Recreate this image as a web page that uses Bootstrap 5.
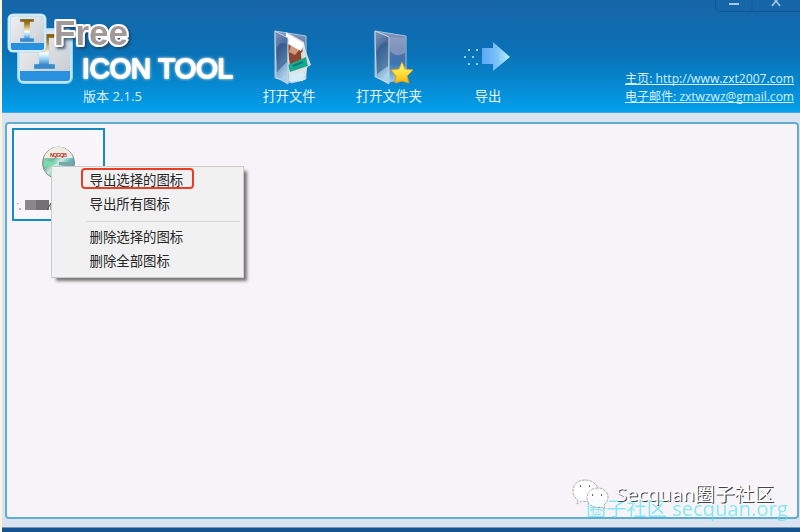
<!DOCTYPE html>
<html lang="zh-CN">
<head>
<meta charset="utf-8">
<meta name="viewport" content="width=device-width, initial-scale=1">
<title>Free Icon Tool</title>
<link rel="stylesheet" href="https://cdn.jsdelivr.net/npm/bootstrap@5.3.0/dist/css/bootstrap.min.css">
<style>
body{height:532px;overflow:hidden;background:#dae4f0;font:13.4px/18px "Open Sans","Noto Sans CJK SC",sans-serif}
.window-frame{height:532px;border-left:2px solid #fdf5e0}
.top-bar{height:113px;background:linear-gradient(#1766a8,#0b70b5 45%,#0684ca 70%,#039ae6 94%,#04a0ee);border-bottom:1px solid #4ba8d8;color:#e4f5ff}
.logo{width:245px;height:112px}
.tool{color:#e9f7ff;font-size:13.2px;line-height:18px;padding-top:24px}
.tool svg{width:60px;height:64px;margin-bottom:-1px}
.tool-a{width:84px}.tool-b{width:116px}.tool-c{width:82px}
.links{padding:70px 6px 0 0;width:178px;font-size:12.3px;line-height:18px}
.links a{color:#d6f0ff;white-space:nowrap}
.links svg{display:block;width:172px;height:18px;overflow:visible}
.window-buttons{top:-4px;right:-4px;width:89px;height:16px;border:1px solid #0c5792;border-radius:0 0 5px 5px;background:#1767a8}
.work-area{height:397px;margin:9px 1px 0 3px;padding:4px 5px;background:#f6f4f8;border:2px solid #62accf;border-radius:4px}
.thumb{width:93px;height:93px;border:2px solid #168bc4;background:#f8f6fa}
.thumb svg{width:89px;height:89px}
.popup{left:51px;top:166px;width:193px;height:112px;background:#f1f1f1;border:1px solid #cbcbcb;box-shadow:4px 4px 3px -1px #777;color:#252525}
.choice{height:24.5px;padding-left:37.5px;line-height:24px;white-space:nowrap}
.choice.selected{margin:1px 0 3px 29px;padding-left:6.5px;width:113px;height:21px;line-height:20px;border:2px solid #e93d25;border-radius:4px}
.divider{height:1px;margin:4px 3px 3px 34px;background:#d8d8d8}
.bottom-bar{height:5px;margin-top:8px;background:#145491;border-top:1px solid #7895b5}
.watermark{left:570px;top:474px;width:230px;height:54px}
.signature{text-shadow:1px 1px 0 #444}
</style>
<script src="https://cdn.jsdelivr.net/npm/bootstrap@5.3.0/dist/js/bootstrap.bundle.min.js"></script>
</head>
<body>
<div class="window-frame">
<header class="top-bar d-flex position-relative">
<svg class="logo flex-shrink-0" viewBox="2 0 245 112">
<defs>
<linearGradient id="tile" x2="1" y2="1"><stop stop-color="#f2f2f2"/><stop offset="1" stop-color="#c4c9cf"/></linearGradient>
<linearGradient id="ink" x2="0" y2="1"><stop stop-color="#805806"/><stop offset=".2" stop-color="#a87818"/><stop offset=".42" stop-color="#e2c98c"/><stop offset=".55" stop-color="#fff"/><stop offset=".72" stop-color="#8fcdf5"/><stop offset=".88" stop-color="#3a87ca"/></linearGradient>
<filter id="shade" x="-20%" y="-30%" width="150%" height="170%"><feDropShadow dx="2" dy="2" stdDeviation="1.5" flood-color="#173c60" flood-opacity=".8"/></filter>
<filter id="glow" x="-10%" y="-40%" width="120%" height="180%"><feDropShadow dx="0" dy="0" stdDeviation="1.5" flood-color="#f1e6df"/></filter>
</defs>
<rect x="18.5" y="29.500" width="53" height="53" rx="5" fill="url(#tile)" stroke="#8fd2f8" stroke-width="3"/>
<rect x="19" y="30" width="52" height="52" rx="5" fill="none" stroke="#f6fbff"/>
<path d="M20 71h50v7q0 3-3 3H23q-3 0-3-3z" fill="#2790df"/>
<path d="M34 34h21v4h-6v26h6v5H34v-5h5V38h-5z" fill="url(#ink)" stroke="#a9dcf8" stroke-width=".4"/>
<rect x="9" y="15" width="36" height="36" rx="4" fill="url(#tile)" stroke="#a8dbfb" stroke-width="3"/>
<rect x="9" y="15" width="36" height="36" rx="4" fill="none" stroke="#f6fbff"/>
<path d="M11 43h33v5q0 2-2 2H13q-2 0-2-2z" fill="#2790df"/>
<path d="M20 19h14v3h-4v16h4v4H20v-4h4V22h-4z" fill="url(#ink)" stroke="#a9dcf8" stroke-width=".4"/>
<text x="54" y="45" textLength="74" lengthAdjust="spacingAndGlyphs" font-family="Liberation Sans" font-size="35" font-weight="700" fill="#a39999" stroke="#fff" stroke-width="4" paint-order="stroke" stroke-linejoin="round" filter="url(#shade)">Free</text>
<text x="82" y="78" textLength="151" lengthAdjust="spacingAndGlyphs" font-family="Liberation Sans" font-size="27.500" fill="#fff" stroke="#fff" stroke-width="1.800" stroke-linejoin="round" filter="url(#glow)">ICON TOOL</text>
<text x="83" y="101" textLength="59" font-family="Open Sans,Noto Sans CJK SC" font-size="13" fill="#dcf2ff">版本 2.1.5</text>
</svg>
<nav class="d-flex">
<div class="tool tool-a d-flex flex-column align-items-center">
<svg viewBox="259 24 60 64">
<defs><linearGradient id="glass" x2="0" y2="1"><stop stop-color="#8d9bc2"/><stop offset=".35" stop-color="#586d9e"/><stop offset=".65" stop-color="#3878b4"/><stop offset="1" stop-color="#9bcce9"/></linearGradient><linearGradient id="front" x2=".3" y2="1"><stop stop-color="#8896bd"/><stop offset=".4" stop-color="#4d6e9d"/><stop offset="1" stop-color="#a9d1e9"/></linearGradient></defs>
<path d="M275 31l31 5v43l-14 4-17-5z" fill="url(#glass)" stroke="#a8c7df"/>
<path d="M286 32l18 10 4 21-3 17-16 1z" fill="#dfe2e5"/><path d="M287 43l15 4 2 11-14 8z" fill="#8c4734"/><path d="M291 45l9 4-5 6-6-3z" fill="#d29a79"/><path d="M286 33l18 11-3 7-15-8z" fill="#fff"/><path d="M301 53l4-4 6 16-9 5z" fill="#d8dedb"/>
<path d="M288 65l18-8 2 9-18 6z" fill="#19a993"/><path d="M293 66l10-4" stroke="#087d73" stroke-width="2"/>
<path d="M290 74l14-2-1 9-13 1z" fill="#d4ecf7"/>
<path d="M275 31l13 7v46l-12-7z" fill="url(#front)" stroke="#c1d6e7"/><path d="M277 48q2-7 10-4v18l-10 10z" fill="#234c84" opacity=".5"/>
</svg><span>打开文件</span></div>
<div class="tool tool-b d-flex flex-column align-items-center">
<svg viewBox="359 24 60 64"><path d="M375 31l31 5v43l-17 3-14-5z" fill="url(#glass)" stroke="#9dc3de"/><path d="M390 37l15 1v15q-9 5-15-2z" fill="#96a7ca" opacity=".65"/><path d="M375 31l14 6v47l-13-7z" fill="url(#front)" stroke="#bed5e5"/><path d="M377 53q2-11 11-11v24l-11 8z" fill="#285786" opacity=".55"/>
<defs><linearGradient id="gold" x2="0" y2="1"><stop stop-color="#fff7a4"/><stop offset=".5" stop-color="#ffe23d"/><stop offset="1" stop-color="#f4b70f"/></linearGradient></defs><path d="M402 62l3 7 8 1-6 6 2 7-7-2-7 2 1-7-5-6 8-1z" fill="url(#gold)" stroke="#e0a024" stroke-linejoin="round"/></svg><span>打开文件夹</span></div>
<div class="tool tool-c d-flex flex-column align-items-center">
<svg viewBox="458 24 60 64"><defs><linearGradient id="arrow"><stop stop-color="#5ca9f2"/><stop offset=".5" stop-color="#79bef9"/><stop offset="1" stop-color="#b6f6ff"/></linearGradient></defs><path d="M482 48h11v-6l17 15-17 14v-7h-11z" fill="url(#arrow)"/><path d="M468 49h2v2h-2zm8 0h2v2h-2zm-4 7h2v2h-2zm-8 0h2v2h-2zm4 7h2v2h-2zm8 0h2v2h-2z" fill="#84d4f8"/></svg><span>导出</span></div>
</nav>
<div class="links ms-auto">
<a href="#"><svg viewBox="0 0 172 18"><text x="3" y="13" textLength="169" lengthAdjust="spacingAndGlyphs" fill="currentColor">主页: http://www.zxt2007.com</text><path d="M3 14.500h169" stroke="currentColor"/></svg></a>
<a href="#"><svg viewBox="0 0 172 18"><text x="3" y="13" textLength="169" lengthAdjust="spacingAndGlyphs" fill="currentColor">电子邮件: zxtwzwz@gmail.com</text><path d="M3 14.500h169" stroke="currentColor"/></svg></a>
</div>
<div class="window-buttons position-absolute"><svg class="d-block" width="87" height="15" viewBox="0 0 87 15"><path d="M13 7h10" stroke="#a5c8e2" stroke-width="2"/><path d="M36 0v15" stroke="#145c98"/><path d="M56 9l4-5 4 5M57 0l3 4 3-4" fill="none" stroke="#9dc3df" stroke-width="1.800"/></svg></div>
</header>
<main class="work-area">
<div class="thumb"><svg class="d-block" viewBox="14 130 89 89"><defs><linearGradient id="disc" x2="1" y2="1"><stop stop-color="#e1e1dc"/><stop offset=".35" stop-color="#6eb997"/><stop offset=".5" stop-color="#ccece2"/><stop offset=".65" stop-color="#63b5bf"/><stop offset="1" stop-color="#568bae"/></linearGradient></defs><circle cx="58.500" cy="163" r="16" fill="url(#disc)" stroke="#8a8d7f"/><path d="M44 158a15 15 0 0 1 29 0z" fill="#f0ece2"/><text x="50" y="157" textLength="17" font-family="Liberation Sans" font-size="5.500" font-weight="700" fill="#b73432">NQGQB</text><path d="M58 163l-14-3v7z" fill="#75ddb0"/><path d="M59 162h13l1 3H59z" fill="#78a99b"/>
<path d="M18 203v1m1 5h2" stroke="#777"/><path d="M25 200h24v10H25z" fill="#737175"/><path d="M25 200h11v10H25z" fill="#89878b"/><path d="M47 210l4-7v7" fill="none" stroke="#555"/></svg></div>
</main>
<footer class="bottom-bar"></footer>
</div>
<div class="popup position-absolute">
<div class="choice selected">导出选择的图标</div>
<div class="choice">导出所有图标</div>
<div class="divider"></div>
<div class="choice">删除选择的图标</div>
<div class="choice">删除全部图标</div>
</div>
<svg class="watermark position-absolute" viewBox="570 474 230 54">
<text x="586" y="516" textLength="202" lengthAdjust="spacingAndGlyphs" font-family="Open Sans,Noto Sans CJK SC" font-size="19.500" fill="#4de3ef" opacity=".65">圈子社区 secquan.org</text>
<g fill="#fff" stroke="#98969a" stroke-width=".8" stroke-dasharray="3 1"><path d="M585 480c-8 0-12 5-12 11 0 4 2 7 5 9l-1 4 5-3c10 2 16-3 16-10 0-6-5-11-13-11z"/><path fill-opacity=".85" d="M598 488c-7 0-11 4-11 10s6 11 14 9l4 2-1-4c8-7 3-17-6-17z"/></g><path d="M580 486h1m8 0h1m2 9h1m8 0h1" stroke="#666" stroke-width="2"/>
<text class="signature" x="616" y="501" textLength="158" lengthAdjust="spacingAndGlyphs" font-family="Open Sans,Noto Sans CJK SC" font-size="19" fill="#fff">Secquan圈子社区</text>
</svg>
</body>
</html>
